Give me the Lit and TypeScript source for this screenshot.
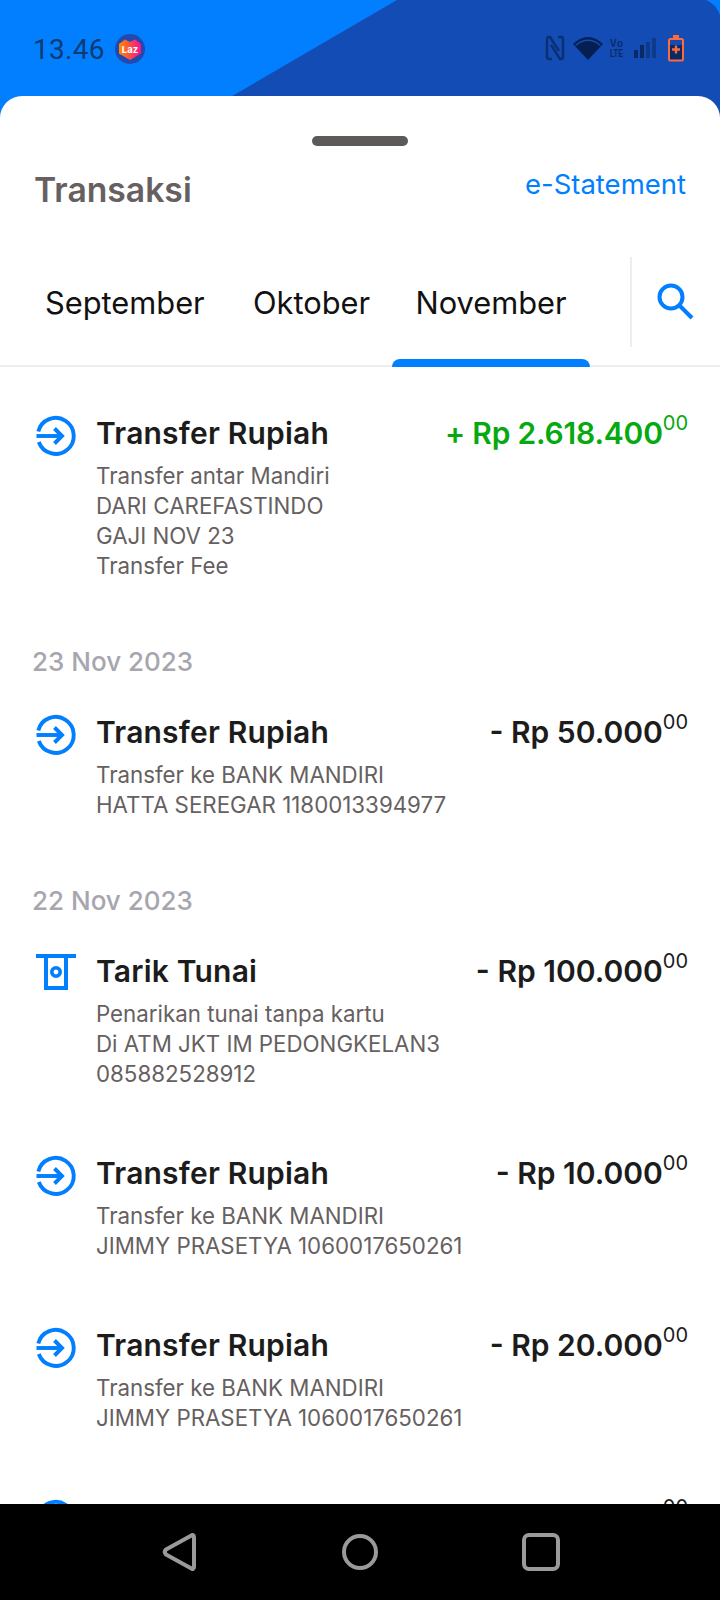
import { LitElement, html, css, svg } from "lit";
import { customElement } from "lit/decorators.js";

type Tx = { kind: "transfer" | "cash"; title: string; amount: string; income?: boolean; lines: string[] };
type Item = { date: string } | Tx;

const items: Item[] = [
  { kind: "transfer", title: "Transfer Rupiah", amount: "+ Rp 2.618.400", income: true,
    lines: ["Transfer antar Mandiri", "DARI CAREFASTINDO", "GAJI NOV 23", "Transfer Fee"] },
  { date: "23 Nov 2023" },
  { kind: "transfer", title: "Transfer Rupiah", amount: "- Rp 50.000",
    lines: ["Transfer ke BANK MANDIRI", "HATTA SEREGAR 1180013394977"] },
  { date: "22 Nov 2023" },
  { kind: "cash", title: "Tarik Tunai", amount: "- Rp 100.000",
    lines: ["Penarikan tunai tanpa kartu", "Di ATM JKT IM PEDONGKELAN3", "085882528912"] },
  { kind: "transfer", title: "Transfer Rupiah", amount: "- Rp 10.000",
    lines: ["Transfer ke BANK MANDIRI", "JIMMY PRASETYA 1060017650261"] },
  { kind: "transfer", title: "Transfer Rupiah", amount: "- Rp 20.000",
    lines: ["Transfer ke BANK MANDIRI", "JIMMY PRASETYA 1060017650261"] },
  { kind: "transfer", title: "Transfer Rupiah", amount: "- Rp 15.000",
    lines: ["Transfer ke BANK MANDIRI", "JIMMY PRASETYA 1060017650261"] },
];

const transferIcon = svg`<svg class="ico" viewBox="0 0 40 40" fill="none" stroke="#027fff" stroke-width="3.900">
  <path d="M2.300 15.500A18 18 0 1 1 2.800 26"/>
  <path d="M0.500 20H25"/>
  <path d="M18.500 12.500L26 20L18.500 27.500"/>
</svg>`;

const cashIcon = svg`<svg class="ico" viewBox="0 0 40 40" fill="none">
  <path d="M0 0H40V4H0Z" fill="#027fff"/>
  <path d="M10 4V34H30V4" stroke="#027fff" stroke-width="4"/>
  <circle cx="20" cy="18" r="4.200" stroke="#027fff" stroke-width="3.600"/>
</svg>`;

@customElement("app-root")
export class AppRoot extends LitElement {
  static styles = css`
    :host { display: block; width: 720px; height: 1600px; font-family: Inter, "Liberation Sans", sans-serif; }
    .screen { height: 1600px; display: flex; flex-direction: column; background: #027fff; position: relative; overflow: hidden; }
    .wave { position: absolute; left: 0; top: 0; width: 720px; height: 120px; }
    .status { position: relative; height: 96px; flex: none; display: flex; align-items: center; padding: 2px 36px 0 33px; box-sizing: border-box; }
    .time { font: 400 28px Roboto, sans-serif; color: #0b3b72; letter-spacing: 0.3px; }
    .laz { width: 30px; height: 30px; margin-left: 10px; }
    .sys { margin-left: auto; width: 140px; height: 30px; overflow: visible; }
    .sheet { position: relative; flex: 1; min-height: 0; background: #fff; border-radius: 22px 22px 0 0; display: flex; flex-direction: column; overflow: hidden; }
    .handle { width: 96px; height: 10px; border-radius: 5px; background: #5f5a5a; margin: 40px auto 0; flex: none; }
    .head { display: flex; justify-content: space-between; padding: 18px 34px 0 34px; height: 42px; align-items: flex-start; flex: none; }
    .title { font-size: 33.700px; font-weight: 600; color: #666060; line-height: 42px; margin-top: 5px; }
    .link { font-size: 27.500px; color: #027fff; line-height: 36px; margin-top: 2px; }
    .tabs { display: flex; height: 112px; margin-top: 49px; border-bottom: 2px solid #eeeeee; flex: none; position: relative; box-sizing: border-box; }
    .tab { position: relative; font-size: 30.800px; color: #111; line-height: 36px; padding-top: 30px; box-sizing: border-box; white-space: nowrap; }
    .tab.sep { width: 253px; padding-left: 45px; }
    .tab.okt { width: 139px; }
    .tab.nov { width: 198px; text-align: center; }
    .tab.nov::after { content: ""; position: absolute; left: 0; right: 0; bottom: -2px; height: 8px; border-radius: 8px 8px 0 0; background: #027fff; }
    .divider { position: absolute; left: 630px; top: 2px; height: 90px; width: 2px; background: #eeeeee; }
    .search { position: absolute; left: 657px; top: 28px; width: 38px; height: 38px; }
    .list { flex: 1; min-height: 0; overflow: hidden; padding-top: 26px; }
    .date { height: 67px; font-size: 26px; font-weight: 500; color: #a6a6ae; padding: 19px 0 0 32px; box-sizing: border-box; line-height: 36px; }
    .row { display: flex; padding: 22px 32px 44px 36px; box-sizing: border-box; }
    .ico { width: 40px; height: 40px; flex: none; margin-top: 1px; overflow: visible; }
    .body { flex: 1; margin-left: 20px; min-width: 0; }
    .top { display: flex; justify-content: space-between; height: 46px; }
    .name { font-size: 30px; font-weight: 600; color: #1c1c1c; line-height: 36px; letter-spacing: 0.2px; }
    .amt { font-size: 30px; font-weight: 600; color: #1c1c1c; line-height: 36px; white-space: nowrap; }
    .amt.in { color: #06a90f; letter-spacing: -0.2px; }
    .amt sup { font-size: 20px; font-weight: 400; line-height: 0; vertical-align: 14px; letter-spacing: 0; }
    .line { font-size: 22.300px; line-height: 30px; color: #666060; white-space: nowrap; }
    .nav { height: 96px; flex: none; background: #000; position: relative; display: flex; }
    .nav svg { position: absolute; left: 0; top: 0; width: 720px; height: 96px; }
  `;

  private tx(t: Tx) {
    return html`<div class="row">
      ${t.kind === "cash" ? cashIcon : transferIcon}
      <div class="body">
        <div class="top">
          <span class="name">${t.title}</span>
          <span class="amt ${t.income ? "in" : ""}">${t.amount}<sup>00</sup></span>
        </div>
        ${t.lines.map((l) => html`<div class="line">${l}</div>`)}
      </div>
    </div>`;
  }

  render() {
    return html`<div class="screen">
      <svg class="wave" viewBox="0 0 720 120"><path d="M191 120L397 0H706Q716 4 720 15V120Z" fill="#134cb5"/></svg>
      <div class="status">
        <span class="time">13.46</span>
        <svg class="laz" viewBox="0 0 30 30">
          <defs><linearGradient id="lg" x1="0" x2="1" y1="0" y2="0"><stop offset="0" stop-color="#ff8a00"/><stop offset="1" stop-color="#f5108f"/></linearGradient></defs>
          <circle cx="15" cy="15" r="15" fill="#2149b0"/>
          <path d="M4 10L10 5.500L15 8L20 5.500L26 10V19.500L15 26L4 19.500Z" fill="url(#lg)"/>
          <text x="15" y="19" text-anchor="middle" font-family="Inter, sans-serif" font-size="9.500" font-weight="700" fill="#fff">Laz</text>
        </svg>
        <svg class="sys" viewBox="0 0 140 30">
          <g fill="none" stroke="#0a2a66" stroke-width="2.400" opacity=".85">
            <path d="M8 25H5Q3 25 3 23V5Q3 3 5 3H6L15 17"/>
            <path d="M14 3H17Q19 3 19 5V23Q19 25 17 25H16L7 11"/>
          </g>
          <path d="M29 10Q44 -4 59 10L44 26Z" fill="#061f52"/>
          <path d="M31.500 11.500Q44 1 56.500 11.500" fill="none" stroke="#134cb5" stroke-width="1.400"/>
          <g fill="#0a2a66" font-family="Liberation Sans, sans-serif" font-weight="700">
            <text x="66" y="13" font-size="10" textLength="13">Vo</text>
            <text x="66" y="23" font-size="10" textLength="13" lengthAdjust="spacingAndGlyphs">LTE</text>
          </g>
          <rect x="90" y="16" width="4" height="8" fill="#0a2a66"/>
          <rect x="96" y="11" width="4" height="13" fill="#0a2a66"/>
          <rect x="102" y="8" width="4" height="16" fill="#0e3a8c"/>
          <rect x="108" y="4" width="4" height="20" fill="#0e3a8c"/>
          <path d="M125 11H139V26H125Z" fill="#0a2a66"/>
          <rect x="125" y="5" width="14" height="21.500" rx="1.500" fill="none" stroke="#ff6a39" stroke-width="2"/>
          <rect x="129" y="1" width="6" height="3" fill="#ff6a39"/>
          <path d="M132 11.500V19.500M128 15.500H136" stroke="#ff6a39" stroke-width="2.400"/>
        </svg>
      </div>
      <div class="sheet">
        <div class="handle"></div>
        <div class="head">
          <span class="title">Transaksi</span>
          <span class="link">e-Statement</span>
        </div>
        <div class="tabs">
          <div class="tab sep">September</div>
          <div class="tab okt">Oktober</div>
          <div class="tab nov">November</div>
          <div class="divider"></div>
          <svg class="search" viewBox="0 0 38 38" fill="none" stroke="#027fff" stroke-width="4">
            <circle cx="14" cy="14" r="11.500"/>
            <path d="M23 23L35 35"/>
          </svg>
        </div>
        <div class="list">
          ${items.map((i) => ("date" in i ? html`<div class="date">${i.date}</div>` : this.tx(i)))}
        </div>
      </div>
      <div class="nav">
        <svg viewBox="0 0 720 96" fill="none" stroke="#9a9a9a" stroke-width="4" stroke-linejoin="round">
          <path d="M194 33.500V62.500Q194 66.500 190.500 64L166 50.500Q163.500 48 166 45.500L190.500 32Q194 29.500 194 33.500Z"/>
          <circle cx="360" cy="48" r="16"/>
          <rect x="524" y="31" width="34" height="34" rx="5"/>
        </svg>
      </div>
    </div>`;
  }
}
